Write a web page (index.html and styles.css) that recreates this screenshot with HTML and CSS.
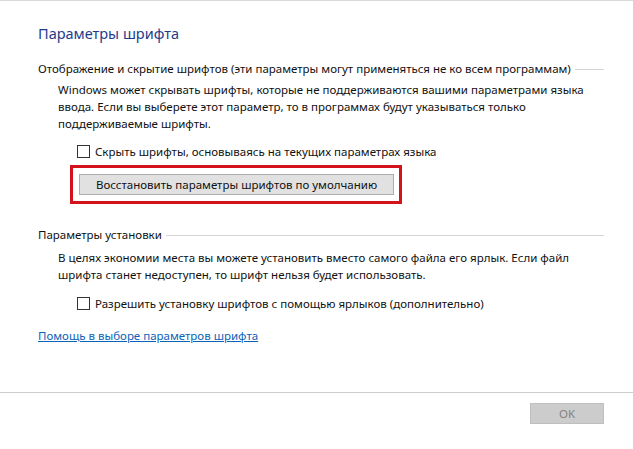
FILE: index.html
```html
<!DOCTYPE html>
<html lang="ru">
<head>
    <meta charset="UTF-8">
    <meta name="viewport" content="width=device-width, initial-scale=1.0">
    <title>Параметры шрифта</title>
    <link rel="stylesheet" href="styles.css">
</head>
<body>
    <div class="window">
        <div class="content">
            <h1 class="title">Параметры шрифта</h1>

            <div class="group">
                <div class="group-head">
                    <span>Отображение и скрытие шрифтов (эти параметры могут применяться не ко всем программам)</span>
                    <div class="rule"></div>
                </div>
                <p class="desc">Windows может скрывать шрифты, которые не поддерживаются вашими параметрами языка<br>ввода. Если вы выберете этот параметр, то в программах будут указываться только<br>поддерживаемые шрифты.</p>
                <label class="check">
                    <span class="box"></span>
                    <span>Скрыть шрифты, основываясь на текущих параметрах языка</span>
                </label>
                <div class="mark">
                    <div class="btn">Восстановить параметры шрифтов по умолчанию</div>
                </div>
            </div>

            <div class="group second">
                <div class="group-head">
                    <span>Параметры установки</span>
                    <div class="rule"></div>
                </div>
                <p class="desc">В целях экономии места вы можете установить вместо самого файла его ярлык. Если файл<br>шрифта станет недоступен, то шрифт нельзя будет использовать.</p>
                <label class="check">
                    <span class="box"></span>
                    <span>Разрешить установку шрифтов с помощью ярлыков (дополнительно)</span>
                </label>
            </div>

            <a class="help" href="#">Помощь в выборе параметров шрифта</a>
        </div>

        <div class="footer">
            <div class="ok">OK</div>
        </div>
    </div>
</body>
</html>
```

FILE: styles.css
```css
*{
    margin: 0;
    padding: 0;
    box-sizing: border-box;
}
html, body{
    height: 100%;
    background: #fff;
}
body{
    font: 11.5px "Noto Sans", "Open Sans", sans-serif;
    color: #111;
    border-top: 1px solid #d9d9d9;
}
.window{
    height: 448px;
    display: flex;
    flex-direction: column;
}
.content{
    flex: 1;
    padding: 22px 29px 0 38px;
}
.title{
    font-size: 14.5px;
    font-weight: normal;
    color: #1e3c8c;
    line-height: 20px;
}
.group{
    margin-top: 17px;
}
.group.second{
    margin-top: 22px;
}
.group-head{
    display: flex;
    align-items: center;
    line-height: 17px;
    white-space: nowrap;
}
.group-head .rule{
    flex: 1;
    border-top: 1px solid #d5d5d5;
    margin-left: 4px;
    margin-top: 1px;
}
.desc{
    padding-left: 20px;
    margin-top: 4px;
    line-height: 17px;
    white-space: nowrap;
}
.second .desc{
    margin-top: 6px;
}
.check{
    display: flex;
    align-items: center;
    margin: 11px 0 0 39px;
    line-height: 17px;
}
.second .check{
    margin-top: 12px;
}
.check .box{
    width: 13px;
    height: 13px;
    border: 1px solid #333;
    background: #fff;
    margin-right: 5px;
}
.mark{
    margin: 5px 0 0 32px;
    width: 332px;
    border: 3px solid #d3121c;
    padding: 6px 5px 6px 6px;
}
.btn{
    height: 21px;
    line-height: 19px;
    text-align: center;
    background: #e1e1e1;
    border: 1px solid #adadad;
}
.help{
    display: inline-block;
    margin-top: 15px;
    color: #0b63b8;
    line-height: 17px;
}
.footer{
    height: 57px;
    border-top: 1px solid #cccccc;
    display: flex;
    justify-content: flex-end;
    padding: 10px 29px 0 0;
}
.ok{
    width: 74px;
    height: 21px;
    line-height: 19px;
    text-align: center;
    background: #cccccc;
    border: 1px solid #bfbfbf;
    color: #838383;
}
```
